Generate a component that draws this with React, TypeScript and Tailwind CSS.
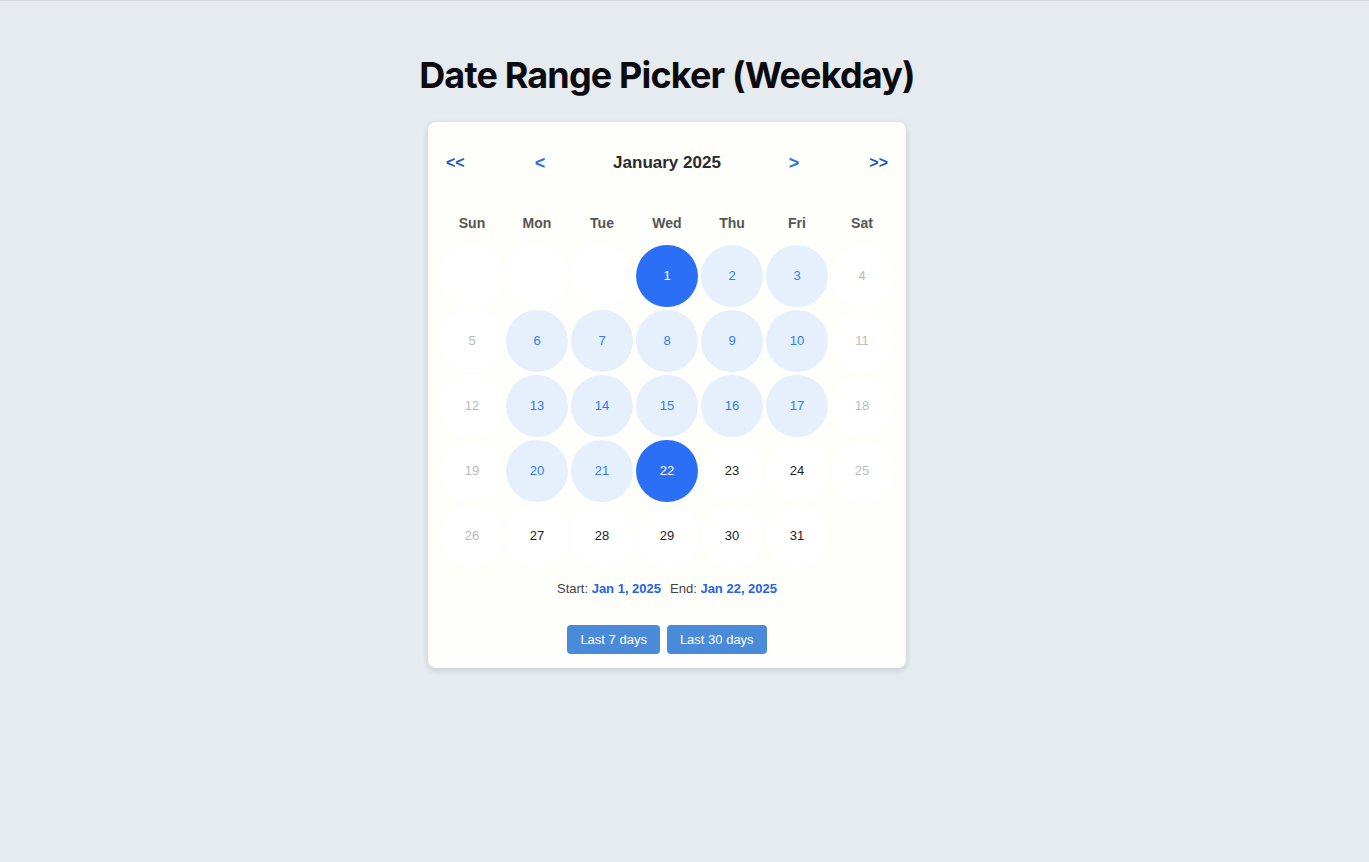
const WEEKDAYS = ['Sun', 'Mon', 'Tue', 'Wed', 'Thu', 'Fri', 'Sat'];

type Day = number | null;

// January 2025 starts on a Wednesday
const DAYS: Day[] = [null, null, null, ...Array.from({ length: 31 }, (_, i) => i + 1)];

const START = 1;
const END = 22;

function DayCell({ day, col }: { day: Day; col: number }) {
  if (day === null) {
    return <div className="aspect-square rounded-full bg-white" />;
  }
  const weekend = col === 0 || col === 6;
  const isEdge = day === START || day === END;
  const inRange = !weekend && day > START && day < END;

  let cls = 'bg-white text-[#222]';
  if (weekend) cls = 'bg-white text-[#bbbbbb]';
  else if (isEdge) cls = 'bg-[#2a6ff6] text-white';
  else if (inRange) cls = 'bg-[#e5f0fc] text-[#2f7ff0]';

  return (
    <div className={`aspect-square rounded-full flex items-center justify-center text-[13px] ${cls}`}>
      {day}
    </div>
  );
}

export default function App() {
  return (
    <div
      className="min-h-[862px] bg-[#e6ebf0] border-t border-[#d6d8db]"
      style={{ fontFamily: '"Liberation Sans", Arial, sans-serif' }}
    >
      <div className="flex flex-col items-center pr-[35px]">
        <h1
          className="mt-[54px] text-[36px] leading-[40px] font-bold text-[#0c0c10] tracking-[-0.85px]"
          style={{ fontFamily: 'Inter, "Liberation Sans", sans-serif' }}
        >
          Date Range Picker (Weekday)
        </h1>

        <div className="mt-[27px] w-[478px] bg-[#fefefa] rounded-lg shadow-[0_2px_6px_rgba(0,0,0,0.15)] px-[13px] pt-6 pb-[14px]">
          <div className="flex items-center justify-between h-[34px] px-[5px]">
            <button className="text-[16px] font-bold text-[#1f55c8] leading-none pr-[2px]">&lt;&lt;</button>
            <button className="text-[18px] font-bold text-[#2b6ff0] leading-none">&lt;</button>
            <div className="text-[17px] font-bold text-[#2b2b2b]">January 2025</div>
            <button className="text-[18px] font-bold text-[#2b6ff0] leading-none">&gt;</button>
            <button className="text-[16px] font-bold text-[#1f55c8] leading-none pl-[2px]">&gt;&gt;</button>
          </div>

          <div className="grid grid-cols-7 gap-x-[3px] mt-[33px]">
            {WEEKDAYS.map((w) => (
              <div key={w} className="text-center text-[14px] leading-5 font-bold text-[#555]">
                {w}
              </div>
            ))}
          </div>

          <div className="grid grid-cols-7 gap-[3px] mt-[12px]">
            {DAYS.map((d, i) => (
              <DayCell key={i} day={d} col={i % 7} />
            ))}
          </div>

          <div className="mt-[14px] text-center text-[13px] leading-4 text-[#444]">
            Start: <span className="font-bold text-[#2563eb]">Jan 1, 2025</span>
            <span className="ml-[9px]">End: </span>
            <span className="font-bold text-[#2563eb]">Jan 22, 2025</span>
          </div>

          <div className="mt-[28px] flex justify-center gap-[7px]">
            <button className="h-[29px] px-[13px] rounded bg-[#4a8bd9] text-white text-[13px]">
              Last 7 days
            </button>
            <button className="h-[29px] px-[13px] rounded bg-[#4a8bd9] text-white text-[13px]">
              Last 30 days
            </button>
          </div>
        </div>
      </div>
    </div>
  );
}
